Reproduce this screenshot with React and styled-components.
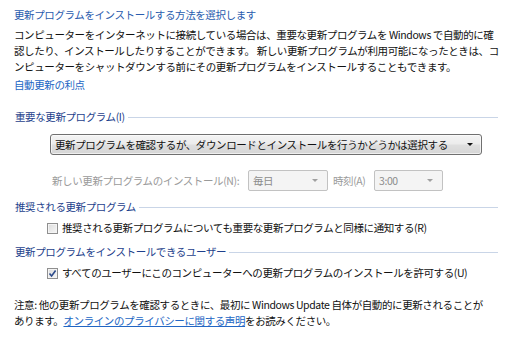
import React from 'react'
import styled, { createGlobalStyle } from 'styled-components'

const GlobalStyle = createGlobalStyle`
    body {
        margin: 0;
        background: #ffffff;
        font-family: "Noto Sans CJK JP", "Noto Sans", sans-serif;
        font-size: 10.5px;
        letter-spacing: -0.4px;
        color: #111111;
    }
`

const App = () => {
    return (
        <>
            <GlobalStyle />
            <Page>
                <Title>更新プログラムをインストールする方法を選択します</Title>
                <Paragraph>
                    <Line>コンピューターをインターネットに接続している場合は、重要な更新プログラムを Windows で自動的に確</Line>
                    <Line>認したり、インストールしたりすることができます。 新しい更新プログラムが利用可能になったときは、コ</Line>
                    <Line>ンピューターをシャットダウンする前にその更新プログラムをインストールすることもできます。</Line>
                </Paragraph>
                <TopLink>自動更新の利点</TopLink>

                <SectionHeader $top={16}>
                    <span>重要な更新プログラム(I)</span>
                    <Rule />
                </SectionHeader>
                <Dropdown>
                    <span>更新プログラムを確認するが、ダウンロードとインストールを行うかどうかは選択する</span>
                    <Arrow $color="#111111" />
                </Dropdown>
                <ScheduleRow>
                    <DimLabel $width={196}>新しい更新プログラムのインストール(N):</DimLabel>
                    <Combo $width={80}>
                        <span>毎日</span>
                        <Arrow $color="#a0a0a0" />
                    </Combo>
                    <DimLabel $width={41} $pad={5}>時刻(A)</DimLabel>
                    <Combo $width={69}>
                        <span>3:00</span>
                        <Arrow $color="#a0a0a0" />
                    </Combo>
                </ScheduleRow>

                <SectionHeader $top={8}>
                    <span>推奨される更新プログラム</span>
                    <Rule />
                </SectionHeader>
                <CheckRow>
                    <CheckBox />
                    <span>推奨される更新プログラムについても重要な更新プログラムと同様に通知する(R)</span>
                </CheckRow>

                <SectionHeader $top={8}>
                    <span>更新プログラムをインストールできるユーザー</span>
                    <Rule />
                </SectionHeader>
                <CheckRow>
                    <CheckBox>
                        <svg width="9" height="9" viewBox="0 0 9 9">
                            <path d="M1.5 4.5 L3.6 7 L7.6 1.6" fill="none" stroke="#2b4a8a" strokeWidth="1.6" />
                        </svg>
                    </CheckBox>
                    <span>すべてのユーザーにこのコンピューターへの更新プログラムのインストールを許可する(U)</span>
                </CheckRow>

                <Note>
                    <Line>注意: 他の更新プログラムを確認するときに、最初に Windows Update 自体が自動的に更新されることが</Line>
                    <Line>あります。<NoteLink>オンラインのプライバシーに関する声明</NoteLink>をお読みください。</Line>
                </Note>
            </Page>
        </>
    )
}

export default App


// # Styled-components
const Page = styled.div`
    width: 512px;
    height: 341px;
    padding: 7px 14px 0 14px;
    box-sizing: border-box;
    overflow: hidden;
    display: flex;
    flex-direction: column;
`

const Title = styled.div`
    line-height: 16px;
    color: #2a5cae;
`

const Paragraph = styled.div`
    margin-top: 4px;
    line-height: 16px;
`

const Line = styled.div`
    white-space: nowrap;
`

const TopLink = styled.div`
    margin-top: 2px;
    line-height: 16px;
    color: #2266c4;
    align-self: flex-start;
`

const SectionHeader = styled.div`
    margin-top: ${p => p.$top}px;
    margin-left: 1px;
    width: 483px;
    display: flex;
    align-items: center;
    gap: 3px;
    line-height: 16px;
    color: #1e3f8c;
    white-space: nowrap;
`

const Rule = styled.div`
    flex: 1;
    height: 1px;
    background: #c9d5e7;
`

const Dropdown = styled.div`
    margin: 9px 0 0 36px;
    width: 432px;
    height: 21px;
    box-sizing: border-box;
    border: 1px solid #707070;
    border-radius: 3px;
    background: linear-gradient(#f4f4f4 0%, #ececec 45%, #dedede 55%, #d6d6d6 100%);
    box-shadow: inset 0 0 0 1px rgba(255, 255, 255, 0.6);
    display: flex;
    align-items: center;
    justify-content: space-between;
    padding: 0 8px 0 4px;
    line-height: 16px;
    white-space: nowrap;
`

const Arrow = styled.div`
    width: 0;
    height: 0;
    border-left: 3px solid transparent;
    border-right: 3px solid transparent;
    border-top: 3px solid ${p => p.$color};
`

const ScheduleRow = styled.div`
    margin: 15px 0 0 38px;
    height: 21px;
    display: flex;
    align-items: center;
`

const DimLabel = styled.div`
    width: ${p => p.$width}px;
    padding-left: ${p => p.$pad || 0}px;
    color: #9a9a9a;
    white-space: nowrap;
`

const Combo = styled.div`
    width: ${p => p.$width}px;
    height: 21px;
    box-sizing: border-box;
    border: 1px solid #c2c2c2;
    border-radius: 2px;
    background: #f4f4f4;
    display: flex;
    align-items: center;
    justify-content: space-between;
    padding: 0 9px 0 4px;
    color: #8c8c8c;
`

const CheckRow = styled.div`
    margin: 5px 0 0 33px;
    display: flex;
    align-items: center;
    gap: 4px;
    line-height: 16px;
    white-space: nowrap;
`

const CheckBox = styled.div`
    width: 11px;
    height: 11px;
    box-sizing: border-box;
    border: 1px solid #8f8f8f;
    background: linear-gradient(135deg, #dcdcdc 0%, #f6f6f6 100%);
    box-shadow: inset 0 0 0 1px #f4f4f4;
    display: flex;
    align-items: center;
    justify-content: center;
`

const Note = styled.div`
    margin-top: 16px;
    line-height: 16px;
`

const NoteLink = styled.span`
    color: #2266c4;
    text-decoration: underline;
`
